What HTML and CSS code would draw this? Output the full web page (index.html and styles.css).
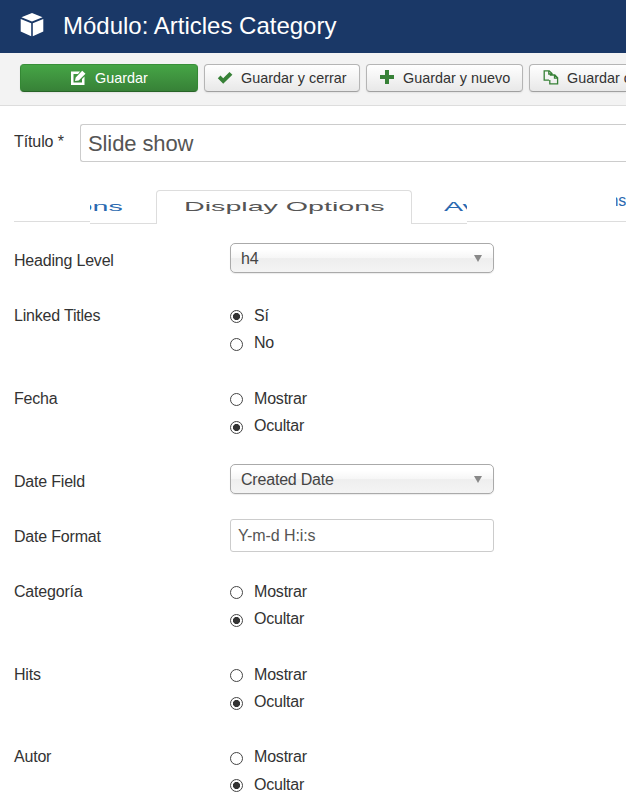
FILE: index.html
```html
<!DOCTYPE html>
<html lang="es">
<head>
<meta charset="utf-8">
<title>Módulo: Articles Category</title>
<link rel="stylesheet" href="styles.css">
</head>
<body>
<header class="header">
  <svg class="cube" viewBox="0 0 24 24"><path d="M12 0 22.6 4.2 12 8.4 1.4 4.2zM.7 6 11.2 10.2V23.2L.7 18.6zM23.3 6 12.8 10.2V23.2l10.5-4.6z"/></svg>
  <h1>Módulo: Articles Category</h1>
</header>
<nav class="toolbar">
  <button class="btn save"><svg viewBox="0 0 16 16"><path fill-rule="evenodd" d="M1 1.5h9L8 4H3.5v8.500h8.500V9l2.500-2.500v8.500H1zM5 11l.7-3.600L12.200.8 15.500 3.800 8.700 10.400z"/></svg><span>Guardar</span></button>
  <button class="btn close"><svg viewBox="0 0 16 16"><path d="M.8 8.300 3.500 5.600 6.200 8.300 12.500 2 15.400 4.700 6.200 13.700z"/></svg><span>Guardar y cerrar</span></button>
  <button class="btn new"><svg viewBox="0 0 16 16"><path d="M6 0h4v5h5v4h-5v5H6V9H1V5h5z"/></svg><span>Guardar y nuevo</span></button>
  <button class="btn copy"><svg class="outline" viewBox="0 0 16 16"><path d="M6 10.200H1.200V.8h5L9 3.500v2M5.800 1v3h3M6.800 5h5l2.800 2.800v6H6.800V10M11.500 5.200v3h3"/></svg><span>Guardar como copia</span></button>
</nav>
<main>
  <div class="title-row"><label>Título *</label><div class="title-input">Slide show</div></div>
  <div class="tabs">
    <div class="tab-rest left"></div>
    <div class="tab previous"><span class="wide">ons</span></div>
    <div class="tab active"><span class="wide">Display Options</span></div>
    <div class="tab next"><span class="wide">Av</span></div>
    <div class="tab-rest right"><span>ns</span></div>
  </div>
  <div class="form">
    <div class="label low">Heading Level</div><div class="select"><span>h4</span><i></i></div>
    <div class="label">Linked Titles</div><div class="radios"><p><i class="radio on"></i>Sí</p><p><i class="radio"></i>No</p></div>
    <div class="label">Fecha</div><div class="radios"><p><i class="radio"></i>Mostrar</p><p><i class="radio on"></i>Ocultar</p></div>
    <div class="label low">Date Field</div><div class="select"><span>Created Date</span><i></i></div>
    <div class="label low">Date Format</div><div class="input">Y-m-d H:i:s</div>
    <div class="label">Categoría</div><div class="radios"><p><i class="radio"></i>Mostrar</p><p><i class="radio on"></i>Ocultar</p></div>
    <div class="label">Hits</div><div class="radios"><p><i class="radio"></i>Mostrar</p><p><i class="radio on"></i>Ocultar</p></div>
    <div class="label">Autor</div><div class="radios"><p><i class="radio"></i>Mostrar</p><p><i class="radio on"></i>Ocultar</p></div>
  </div>
</main>
</body>
</html>
```

FILE: styles.css
```css
* { box-sizing: border-box; }
html { overflow: hidden; }
body {
  margin: 0;
  height: 811px;
  overflow: hidden;
  background: #fff;
  color: #333;
  font: 16px/27.5px "Liberation Sans", Arial, sans-serif;
  letter-spacing: -0.2px;
}
p, h1 { margin: 0; }

.header {
  display: flex;
  align-items: center;
  height: 53px;
  padding-left: 20px;
  background: #1a3867;
  color: #fff;
}
.cube { width: 24px; height: 24px; margin-right: 19px; margin-top: -4px; fill: #fff; }
.header h1 { font-size: 24px; font-weight: 400; line-height: 52px; letter-spacing: 0; margin-top: -1px; }

.toolbar {
  display: flex;
  gap: 6px;
  height: 53px;
  padding: 11px 0 0 20px;
  overflow: hidden;
  background: #f3f3f3;
  border-bottom: 1px solid #ddd;
}
.btn {
  display: flex;
  flex: none;
  align-items: center;
  height: 28px;
  padding: 0 0 0 12px;
  border: 1px solid #b5b5b5;
  border-bottom-color: #a0a0a0;
  border-radius: 4px;
  background: linear-gradient(#fff, #e8e8e8);
  box-shadow: 0 1px 2px rgba(0, 0, 0, .07);
  color: #333;
  font: 14.4px/26px "Liberation Sans", Arial, sans-serif;
  white-space: nowrap;
}
.btn svg { width: 16px; height: 16px; margin-right: 8px; fill: #378137; }
.btn .outline { fill: none; stroke: #378137; stroke-width: 1.3; }
.save {
  width: 178px;
  padding-left: 49px;
  border-color: #398f39 #348834 #286428;
  background: linear-gradient(#46a546, #378137);
  color: #fff;
}
.save svg { fill: #fff; margin-right: 9px; }
.close { width: 156px; }
.new { width: 157px; }
.copy { flex: 1; min-width: 0; padding-left: 13px; border-right: 0; border-radius: 4px 0 0 4px; }
.copy svg { flex: none; }

.title-row { display: flex; padding: 18px 0 0 14px; height: 84px; }
.title-row label { flex: none; width: 66px; line-height: 36px; letter-spacing: -0.1px; }
.title-input {
  flex: 1;
  height: 38px;
  padding-left: 7px;
  border: 1px solid #ccc;
  border-right: 0;
  border-radius: 3px 0 0 3px;
  color: #555;
  font-size: 22px;
  line-height: 37px;
  letter-spacing: -0.1px;
}

.tabs { display: flex; align-items: flex-start; height: 53px; padding-left: 14px; }
.tab { display: flex; height: 34px; border-bottom: 1px solid #ddd; font-size: 13.5px; line-height: 34px; letter-spacing: 0; white-space: nowrap; overflow: hidden; color: #2a69b0; }
.wide { display: block; transform: scaleX(2.12); }
.tab-rest { height: 32px; border-bottom: 1px solid #ddd; color: #2a69b0; overflow: hidden; }
.left { width: 76px; }
.right { flex: 1; display: flex; justify-content: flex-end; line-height: 22px; }
.right span { width: 10px; direction: rtl; overflow: hidden; }
.previous { width: 66px; justify-content: flex-end; padding-right: 33px; }
.previous .wide { transform-origin: right; }
.active { width: 256px; justify-content: center; border: 1px solid #ddd; border-bottom: 0; border-radius: 4px 4px 0 0; color: #555; line-height: 32px; }
.next { width: 55px; padding-left: 32px; }
.next .wide { transform-origin: left; }

.form {
  display: grid;
  grid-template-columns: 216px 264px;
  grid-template-rows: 58.5px 83px 79.5px 55px 58.5px 83px 82.5px 68px;
  padding-left: 14px;
}
.low { padding-top: 3.5px; }
.select {
  display: flex;
  align-items: center;
  justify-content: space-between;
  height: 30px;
  padding: 0 11px 0 10px;
  border: 1px solid #aaa;
  border-radius: 5px;
  background: linear-gradient(#fff 20%, #f6f6f6 50%, #eee 52%, #f4f4f4);
  box-shadow: 0 1px 1px rgba(0, 0, 0, .08);
  color: #444;
}
.select span { padding-top: 1px; }
.select i { border: 4.5px solid transparent; border-top: 7px solid #888; border-bottom: 0; }
.input { height: 33px; padding-left: 7px; border: 1px solid #ccc; border-radius: 3px; color: #555; line-height: 31px; letter-spacing: -0.1px; }
.radios p { display: flex; align-items: center; }
.radio { width: 13px; height: 13px; margin: 3px 11px 0 0; border: 1px solid #444; border-radius: 50%; }
.on { background: radial-gradient(circle, #333 3.2px, #fff 3.9px); }
```
